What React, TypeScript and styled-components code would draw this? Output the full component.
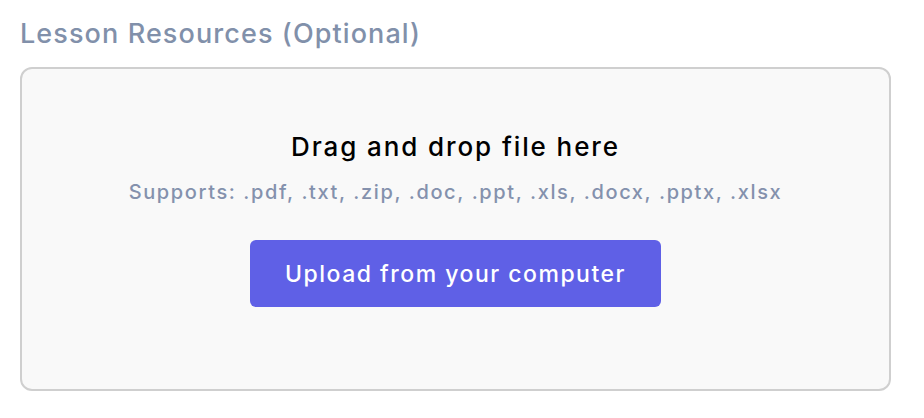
import React from "react";
import styled, { createGlobalStyle } from "styled-components";

const Global = createGlobalStyle`
  html, body { margin: 0; padding: 0; background: #ffffff; }
  body { font-family: Inter, "Open Sans", sans-serif; }
`;

const Page = styled.div`
  padding: 16px 33px 0 20px;
  display: flex;
  flex-direction: column;
`;

const Heading = styled.h2`
  margin: 0;
  font-family: Inter, sans-serif;
  font-weight: 500;
  font-size: 27px;
  line-height: 36px;
  color: #8190aa;
  letter-spacing: 1.1px;
`;

const DropZone = styled.div`
  margin-top: 15px;
  height: 324px;
  box-sizing: border-box;
  border: 2px solid #cfcfcf;
  border-radius: 12px;
  background: #f9f9f9;
  display: flex;
  flex-direction: column;
  align-items: center;
  padding-top: 60px;
`;

const Title = styled.div`
  font-family: Inter, sans-serif;
  font-size: 26px;
  font-weight: 500;
  color: #000;
  line-height: 36px;
  letter-spacing: 1.9px;
`;

const Supports = styled.div`
  margin-top: 13px;
  font-family: Inter, sans-serif;
  font-size: 20px;
  font-weight: 500;
  color: #8491ad;
  line-height: 28px;
  letter-spacing: 1.6px;
`;

const UploadButton = styled.button`
  margin-top: 34px;
  width: 411px;
  height: 67px;
  border: none;
  border-radius: 6px;
  background: #5f60e6;
  color: #ffffff;
  font-family: Inter, sans-serif;
  font-size: 23px;
  font-weight: 500;
  letter-spacing: 1.5px;
  cursor: pointer;
`;

export default function App() {
  return (
    <>
      <Global />
      <Page>
        <Heading>Lesson Resources (Optional)</Heading>
        <DropZone>
          <Title>Drag and drop file here</Title>
          <Supports>Supports: .pdf, .txt, .zip, .doc, .ppt, .xls, .docx, .pptx, .xlsx</Supports>
          <UploadButton>Upload from your computer</UploadButton>
        </DropZone>
      </Page>
    </>
  );
}
